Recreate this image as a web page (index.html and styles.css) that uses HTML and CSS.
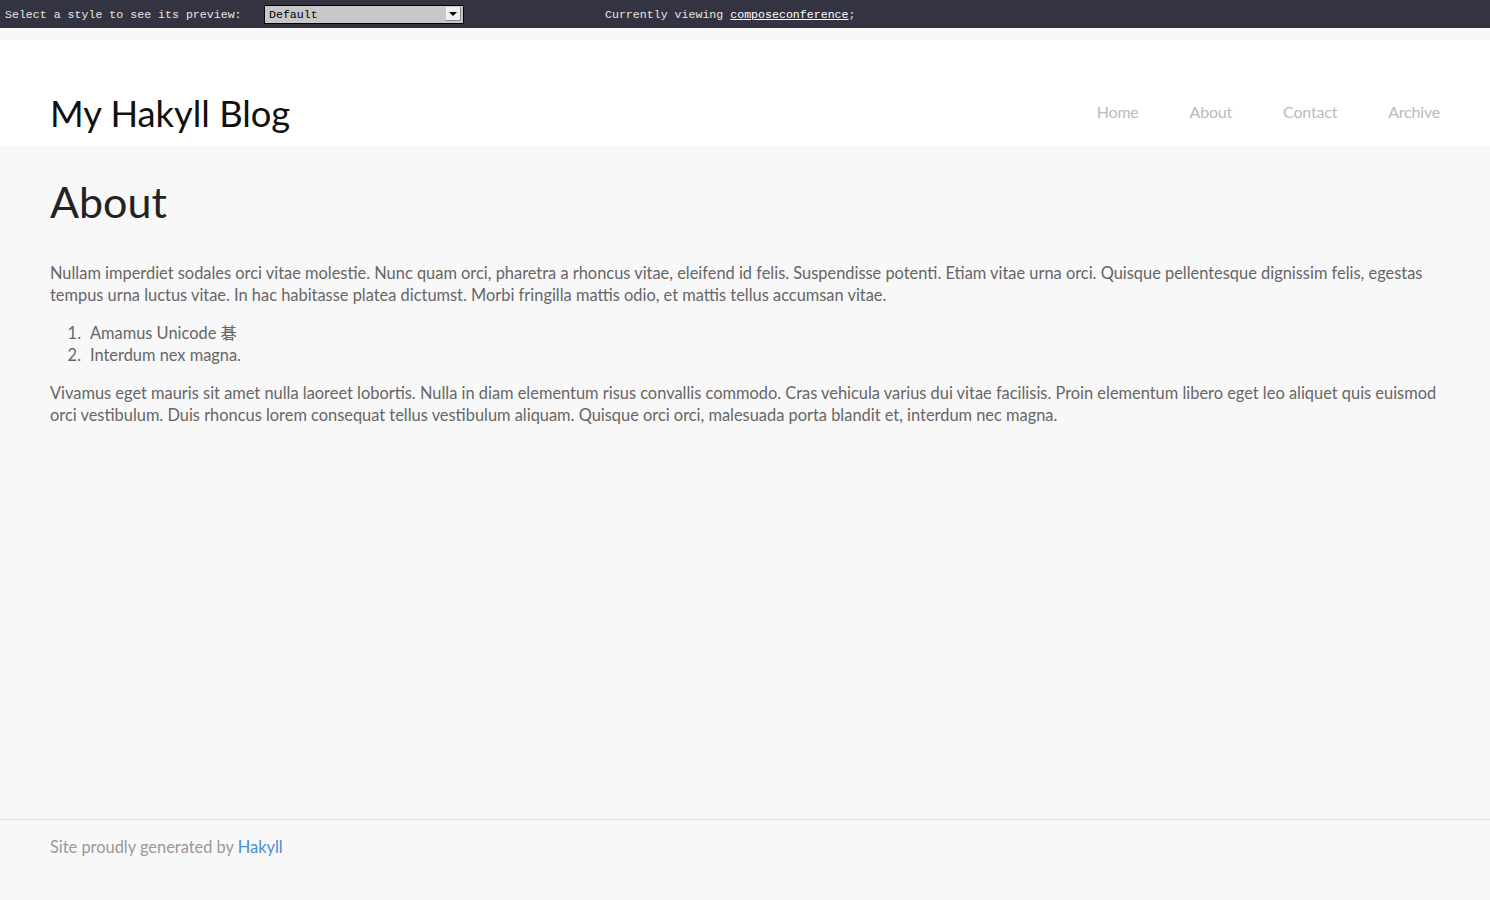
FILE: index.html
```html
<!DOCTYPE html>
<html>
<head>
<meta charset="utf-8">
<title>About</title>
<link rel="stylesheet" href="styles.css">
</head>
<body>
<div class="topbar">
  <span class="tb-label">Select a style to see its preview:</span>
  <span class="fake-select"><span class="fs-text">Default</span><span class="fs-btn"><span class="fs-arrow"></span></span></span>
  <span class="tb-viewing">Currently viewing <a href="#" class="tb-link">composeconference</a>;</span>
</div>
<div class="spacer"></div>
<header class="header">
  <div class="logo">My Hakyll Blog</div>
  <nav class="nav">
    <a href="#">Home</a>
    <a href="#">About</a>
    <a href="#">Contact</a>
    <a href="#">Archive</a>
  </nav>
</header>
<main class="main">
  <h1 class="title">About</h1>
  <p>Nullam imperdiet sodales orci vitae molestie. Nunc quam orci, pharetra a rhoncus vitae, eleifend id felis. Suspendisse potenti. Etiam vitae urna orci. Quisque pellentesque dignissim felis, egestas tempus urna luctus vitae. In hac habitasse platea dictumst. Morbi fringilla mattis odio, et mattis tellus accumsan vitae.</p>
  <ol class="list">
    <li>Amamus Unicode 碁</li>
    <li>Interdum nex magna.</li>
  </ol>
  <p>Vivamus eget mauris sit amet nulla laoreet lobortis. Nulla in diam elementum risus convallis commodo. Cras vehicula varius dui vitae facilisis. Proin elementum libero eget leo aliquet quis euismod orci vestibulum. Duis rhoncus lorem consequat tellus vestibulum aliquam. Quisque orci orci, malesuada porta blandit et, interdum nec magna.</p>
</main>
<footer class="footer">
  Site proudly generated by <a href="#">Hakyll</a>
</footer>
</body>
</html>
```
FILE: styles.css
```css
html, body {
  margin: 0;
  padding: 0;
}
body {
  background: #f8f8f8;
  font-family: Lato, "Noto Sans CJK JP", sans-serif;
  color: #666;
}
.topbar {
  height: 28px;
  background: #343341;
  display: flex;
  align-items: center;
  font-family: "Liberation Mono", monospace;
  font-size: 11.6px;
  color: #e6e6e6;
}
.tb-label {
  margin-left: 5px;
  width: 259px;
}
.fake-select {
  width: 198px;
  height: 17px;
  border: 1px solid #000;
  background: #c8c8c8;
  display: flex;
  align-items: center;
  justify-content: space-between;
  color: #000;
  box-sizing: content-box;
}
.fs-text {
  margin-left: 4px;
}
.fs-btn {
  width: 14px;
  height: 13px;
  margin-right: 2px;
  background: #f0f0f0;
  border-right: 1px solid #888;
  border-bottom: 1px solid #888;
  display: flex;
  align-items: center;
  justify-content: center;
}
.fs-arrow {
  width: 0;
  height: 0;
  border-left: 4px solid transparent;
  border-right: 4px solid transparent;
  border-top: 4px solid #000;
}
.tb-viewing {
  margin-left: 141px;
}
.tb-link {
  color: #fff;
}
.spacer {
  height: 12px;
}
.header {
  background: #fff;
  height: 106px;
  box-sizing: border-box;
  padding: 0 50px 8px;
  display: flex;
  align-items: flex-end;
  justify-content: space-between;
}
.logo {
  font-size: 36.3px;
  font-weight: 400;
  color: #111;
  line-height: 1;
  padding-bottom: 7px;
}
.nav {
  display: flex;
  gap: 51px;
  padding-bottom: 17px;
}
.nav a {
  color: #bbb;
  text-decoration: none;
  font-size: 16px;
  letter-spacing: -0.2px;
}
.main {
  padding: 30px 50px 0;
  min-height: 673px;
  box-sizing: border-box;
}
.title {
  font-weight: normal;
  font-size: 43px;
  color: #222;
  margin: 0 0 34px;
  line-height: 1.2;
}
.main p {
  font-size: 16.4px;
  line-height: 22px;
  margin: 0 0 16px;
}
.list {
  font-size: 16.4px;
  line-height: 22px;
  margin: 0 0 16px;
  padding-left: 40px;
  list-style: none;
  counter-reset: item;
}
.list li {
  counter-increment: item;
}
.list li::before {
  content: counter(item) ".";
  display: inline-block;
  width: 31px;
  margin-left: -40px;
  margin-right: 9px;
  text-align: right;
}
.footer {
  border-top: 1px solid #ddd;
  padding: 17px 50px 0;
  height: 80px;
  box-sizing: border-box;
  font-size: 16.4px;
  color: #999;
}
.footer a {
  color: #4a8ed0;
  text-decoration: none;
}
```
